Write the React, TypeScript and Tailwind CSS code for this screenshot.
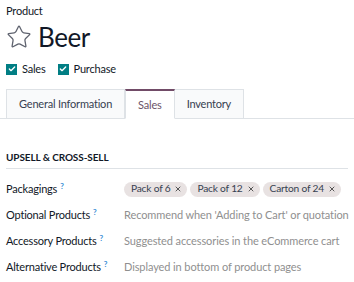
import { Check, Star, X } from 'lucide-react';

const TAGS = ['Pack of 6', 'Pack of 12', 'Carton of 24'];

const ROWS = [
    { label: 'Optional Products', hint: "Recommend when 'Adding to Cart' or quotation" },
    { label: 'Accessory Products', hint: 'Suggested accessories in the eCommerce cart' },
    { label: 'Alternative Products', hint: 'Displayed in bottom of product pages' },
];

function Checkbox({ label }: { label: string }) {
    return (
        <label className="flex items-center gap-[5px]">
            <span className="flex h-[11px] w-[11px] items-center justify-center bg-[#017e84]">
                <Check className="h-[8px] w-[8px] text-white" strokeWidth={4} />
            </span>
            <span>{label}</span>
        </label>
    );
}

function Help() {
    return <sup className="ml-[3px] text-[8px] font-bold text-[#3d8fd6]">?</sup>;
}

export default function App() {
    return (
        <div className="h-[282px] w-[354px] overflow-hidden bg-white text-[11px] tracking-[-0.2px] text-[#111827]" style={{ fontFamily: 'Lato, sans-serif' }}>
            <div className="px-[6px] pt-[3px]">
                <div className="leading-[16px]">Product</div>
                <div className="mt-[2px] flex items-center gap-[6px]">
                    <Star className="h-[26px] w-[26px] text-[#5f636f]" strokeWidth={1.2} />
                    <h1 className="text-[26px] leading-[32px] tracking-[-0.4px]">Beer</h1>
                </div>
                <div className="mt-[8px] flex items-center gap-[12px] leading-[16px]">
                    <Checkbox label="Sales" />
                    <Checkbox label="Purchase" />
                </div>
            </div>

            <div className="mt-[12px] flex border-b border-[#dee2e6] px-[6px]">
                <div className="mb-[-1px] border border-[#dee2e6] bg-[#f9fafb] px-[12px] py-[6px] leading-[16px] text-[#374151]">General Information</div>
                <div className="mb-[-1px] border-x border-b border-t-[2px] border-x-[#dee2e6] border-b-white border-t-[#714b67] bg-white px-[12px] py-[6px] leading-[15px] text-[#6b5468]">Sales</div>
                <div className="mb-[-1px] border border-l-0 border-[#dee2e6] bg-[#f9fafb] px-[12px] py-[6px] leading-[16px] text-[#374151]">Inventory</div>
            </div>

            <div className="px-[6px] pt-[31px]">
                <div className="border-b border-[#dee2e6] pb-[3px] text-[10px] font-bold leading-[15px] tracking-[-0.1px]">UPSELL &amp; CROSS-SELL</div>
                <div className="mt-[7px] flex flex-col">
                    <div className="flex h-[26px] items-center">
                        <div className="w-[118px] shrink-0 whitespace-nowrap">
                            Packagings<Help />
                        </div>
                        <div className="flex gap-[3px]">
                            {TAGS.map(t => (
                                <span key={t} className="flex h-[15px] items-center gap-[4px] whitespace-nowrap rounded-full bg-[#e8e2e2] pl-[7px] pr-[5px] text-[10.2px] text-[#374151]">
                                    {t}
                                    <X className="h-[8px] w-[8px] text-[#555]" strokeWidth={3} />
                                </span>
                            ))}
                        </div>
                    </div>
                    {ROWS.map(r => (
                        <div key={r.label} className="flex h-[26px] items-center">
                            <div className="w-[118px] shrink-0 whitespace-nowrap">
                                {r.label}<Help />
                            </div>
                            <div className="whitespace-nowrap tracking-[-0.1px] text-[#8f8f8f]">{r.hint}</div>
                        </div>
                    ))}
                </div>
            </div>
        </div>
    );
}
